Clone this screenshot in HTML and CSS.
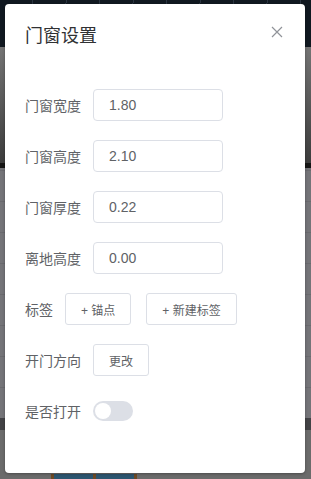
FILE: index.html
```html
<!DOCTYPE html>
<html>
  <head>
    <meta charset="UTF-8" />
    <meta name="viewport" content="width=device-width, initial-scale=1.0" />
    <title>门窗设置</title>
    <link rel="stylesheet" href="styles.css">
  </head>
  <body>
    <div class="scene">
      <div class="sky"></div>
      <div class="wall"></div>
      <div class="edge"></div>
      <div class="floor"></div>
      <div class="beam"></div>
      <div class="ground">
        <div class="door-bit">
          <span class="pane"></span>
          <span class="pane"></span>
        </div>
      </div>
    </div>

    <div class="dialog">
      <div class="dialog-header">
        <span class="dialog-title">门窗设置</span>
        <button class="dialog-close" type="button">
          <svg width="12" height="12" viewBox="0 0 12 12">
            <path d="M1 1 L11 11 M11 1 L1 11" stroke="#909399" stroke-width="1.2" fill="none" />
          </svg>
        </button>
      </div>
      <div class="dialog-body">
        <div class="form-row">
          <label class="form-label">门窗宽度</label>
          <input class="form-input" type="text" value="1.80" />
        </div>
        <div class="form-row">
          <label class="form-label">门窗高度</label>
          <input class="form-input" type="text" value="2.10" />
        </div>
        <div class="form-row">
          <label class="form-label">门窗厚度</label>
          <input class="form-input" type="text" value="0.22" />
        </div>
        <div class="form-row">
          <label class="form-label">离地高度</label>
          <input class="form-input" type="text" value="0.00" />
        </div>
        <div class="form-row">
          <label class="form-label">标签</label>
          <button class="btn" type="button">+ 锚点</button>
          <button class="btn btn-gap" type="button">+ 新建标签</button>
        </div>
        <div class="form-row">
          <label class="form-label">开门方向</label>
          <button class="btn" type="button">更改</button>
        </div>
        <div class="form-row">
          <label class="form-label">是否打开</label>
          <span class="switch"><span class="switch-dot"></span></span>
        </div>
      </div>
    </div>
  </body>
</html>
```

FILE: styles.css
```css
body {
  margin: 0;
  font-family: "Liberation Sans", "Noto Sans CJK SC", sans-serif;
  background-color: #6b6b6b;
}
.scene {
  display: flex;
  flex-direction: column;
  height: 479px;
  overflow: hidden;
}
.sky {
  height: 47px;
  background-color: #101820;
  background-image: repeating-linear-gradient(100deg, transparent 0, transparent 32px, #2a3440 32px, #2a3440 33px);
}
.wall {
  height: 116px;
  background: linear-gradient(#747474, #3c3c3c);
}
.edge {
  height: 5px;
  background-color: #151515;
}
.floor {
  height: 250px;
  background-color: #747478;
  background-image: repeating-linear-gradient(0deg, transparent 0, transparent 30px, #6a6a6e 30px, #6a6a6e 31px);
}
.beam {
  height: 12px;
  background-color: #424245;
}
.ground {
  flex: 1;
  background-color: #6b6b6b;
  position: relative;
}
.door-bit {
  position: absolute;
  left: 51px;
  top: 44px;
  width: 86px;
  height: 10px;
  display: flex;
  gap: 3px;
  padding: 0 3px;
  box-sizing: border-box;
  background-color: #6e4a26;
}
.pane {
  flex: 1;
  background-color: #2d5670;
}

.dialog {
  position: absolute;
  left: 5px;
  top: 4px;
  width: 300px;
  height: 469px;
  background-color: #fff;
  border-radius: 4px;
  box-shadow: 0 1px 3px rgba(0, 0, 0, 0.3);
}
.dialog-header {
  padding: 20px 20px 0;
  position: relative;
}
.dialog-title {
  font-size: 18px;
  line-height: 24px;
  color: #303133;
}
.dialog-close {
  position: absolute;
  top: 22px;
  right: 22px;
  width: 12px;
  height: 12px;
  padding: 0;
  border: none;
  background: none;
  display: flex;
}
.dialog-body {
  padding: 41px 20px 0;
}
.form-row {
  display: flex;
  align-items: center;
  height: 32px;
  margin-bottom: 19px;
}
.form-label {
  font-size: 14px;
  color: #606266;
  padding-right: 12px;
}
.form-input {
  width: 130px;
  height: 32px;
  box-sizing: border-box;
  border: 1px solid #dcdfe6;
  border-radius: 4px;
  padding: 0 15px;
  font-family: "Liberation Sans", "Noto Sans CJK SC", sans-serif;
  font-size: 14px;
  color: #606266;
  outline: none;
}
.btn {
  height: 32px;
  padding: 0 15px;
  border: 1px solid #dcdfe6;
  border-radius: 3px;
  background-color: #fff;
  font-family: "Liberation Sans", "Noto Sans CJK SC", sans-serif;
  font-size: 12px;
  color: #606266;
}
.btn-gap {
  margin-left: 15px;
}
.switch {
  width: 40px;
  height: 20px;
  border-radius: 10px;
  background-color: #dcdfe6;
  display: flex;
  align-items: center;
  padding: 0 2px;
  box-sizing: border-box;
}
.switch-dot {
  width: 16px;
  height: 16px;
  border-radius: 50%;
  background-color: #fff;
}
```
